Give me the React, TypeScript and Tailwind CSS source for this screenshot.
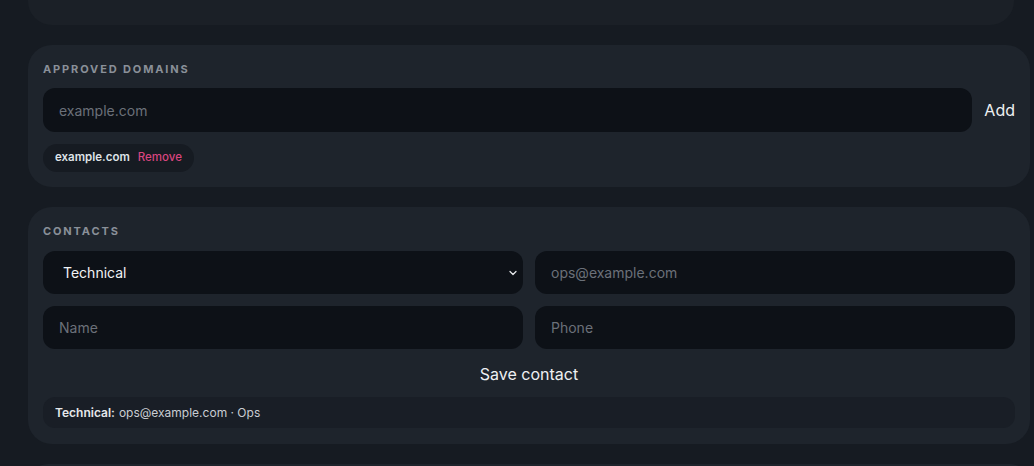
import React, { useState } from 'react'
import { ChevronDown } from 'lucide-react'

type Contact = { role: string; email: string; name: string; phone: string }

const font = { fontFamily: 'Inter, "Noto Sans", sans-serif' }

function SectionLabel({ children }: { children: React.ReactNode }) {
  return (
    <h3 className="text-[11px] leading-4 font-bold uppercase tracking-[0.17em] text-[#8a9099]">
      {children}
    </h3>
  )
}

export default function App() {
  const [domain, setDomain] = useState('')
  const [domains, setDomains] = useState<string[]>(['example.com'])
  const [role, setRole] = useState('Technical')
  const [contacts] = useState<Contact[]>([
    { role: 'Technical', email: 'ops@example.com', name: 'Ops', phone: '' },
  ])

  const inputCls =
    'w-full h-[43px] rounded-xl bg-[#0d1117] px-4 text-[14px] text-[#e6e8eb] placeholder:text-[#6b7079] outline-none'

  return (
    <div className="h-[466px] bg-[#161b22] overflow-hidden" style={font}>
      <div className="flex flex-col gap-5 pl-7 pr-1 -mt-[39px]">
        {/* previous settings card, mostly scrolled off */}
        <div className="h-[64px] w-[986px] rounded-3xl bg-[#1b2027]" />

        {/* Approved domains */}
        <section className="rounded-3xl bg-[#1e242c] px-[15px] pt-4 pb-[15px]">
          <SectionLabel>Approved domains</SectionLabel>
          <div className="mt-[11px] flex items-center gap-3">
            <input
              value={domain}
              onChange={(e) => setDomain(e.target.value)}
              placeholder="example.com"
              className="flex-1 h-11 rounded-xl bg-[#0d1117] px-4 text-[14px] text-[#e6e8eb] placeholder:text-[#6b7079] outline-none"
            />
            <button
              onClick={() => {
                if (domain) setDomains([...domains, domain])
                setDomain('')
              }}
              className="text-[16px] text-[#eef0f2]"
            >
              Add
            </button>
          </div>
          <div className="mt-3 flex gap-2">
            {domains.map((d) => (
              <span
                key={d}
                className="inline-flex h-7 items-center gap-2 rounded-full bg-[#161b22] px-3 text-[11.5px]"
              >
                <span className="font-semibold text-[#dfe3e8]">{d}</span>
                <button
                  onClick={() => setDomains(domains.filter((x) => x !== d))}
                  className="font-medium text-[#d9457f]"
                >
                  Remove
                </button>
              </span>
            ))}
          </div>
        </section>

        {/* Contacts */}
        <section className="rounded-3xl bg-[#1e242c] px-[15px] pt-4 pb-4">
          <SectionLabel>Contacts</SectionLabel>
          <div className="mt-3 grid grid-cols-2 gap-3">
            <div className="relative">
              <select
                value={role}
                onChange={(e) => setRole(e.target.value)}
                className="w-full h-[43px] appearance-none rounded-xl bg-[#0d1117] px-5 text-[14px] text-[#f1f3f5] outline-none"
              >
                <option>Technical</option>
                <option>Billing</option>
                <option>Security</option>
              </select>
              <ChevronDown
                size={12}
                strokeWidth={2.5}
                className="pointer-events-none absolute right-[4px] top-1/2 -translate-y-1/2 text-[#e6e8eb]"
              />
            </div>
            <input placeholder="ops@example.com" className={inputCls} />
            <input placeholder="Name" className={inputCls} />
            <input placeholder="Phone" className={inputCls} />
          </div>
          <div className="mt-3 flex justify-center">
            <button className="h-[26px] text-[16px] text-[#eef0f2]">Save contact</button>
          </div>
          <ul className="mt-[10px] space-y-2">
            {contacts.map((c) => (
              <li
                key={c.email}
                className="flex h-[31px] items-center rounded-xl bg-[#191e26] px-3 text-[12px] text-[#c9cdd3]"
              >
                <span className="font-semibold text-[#e6e8eb]">{c.role}:</span>
                <span className="ml-1">
                  {c.email} · {c.name}
                </span>
              </li>
            ))}
          </ul>
        </section>

        <div className="h-[40px] rounded-3xl bg-[#1e242c]" />
      </div>
    </div>
  )
}
